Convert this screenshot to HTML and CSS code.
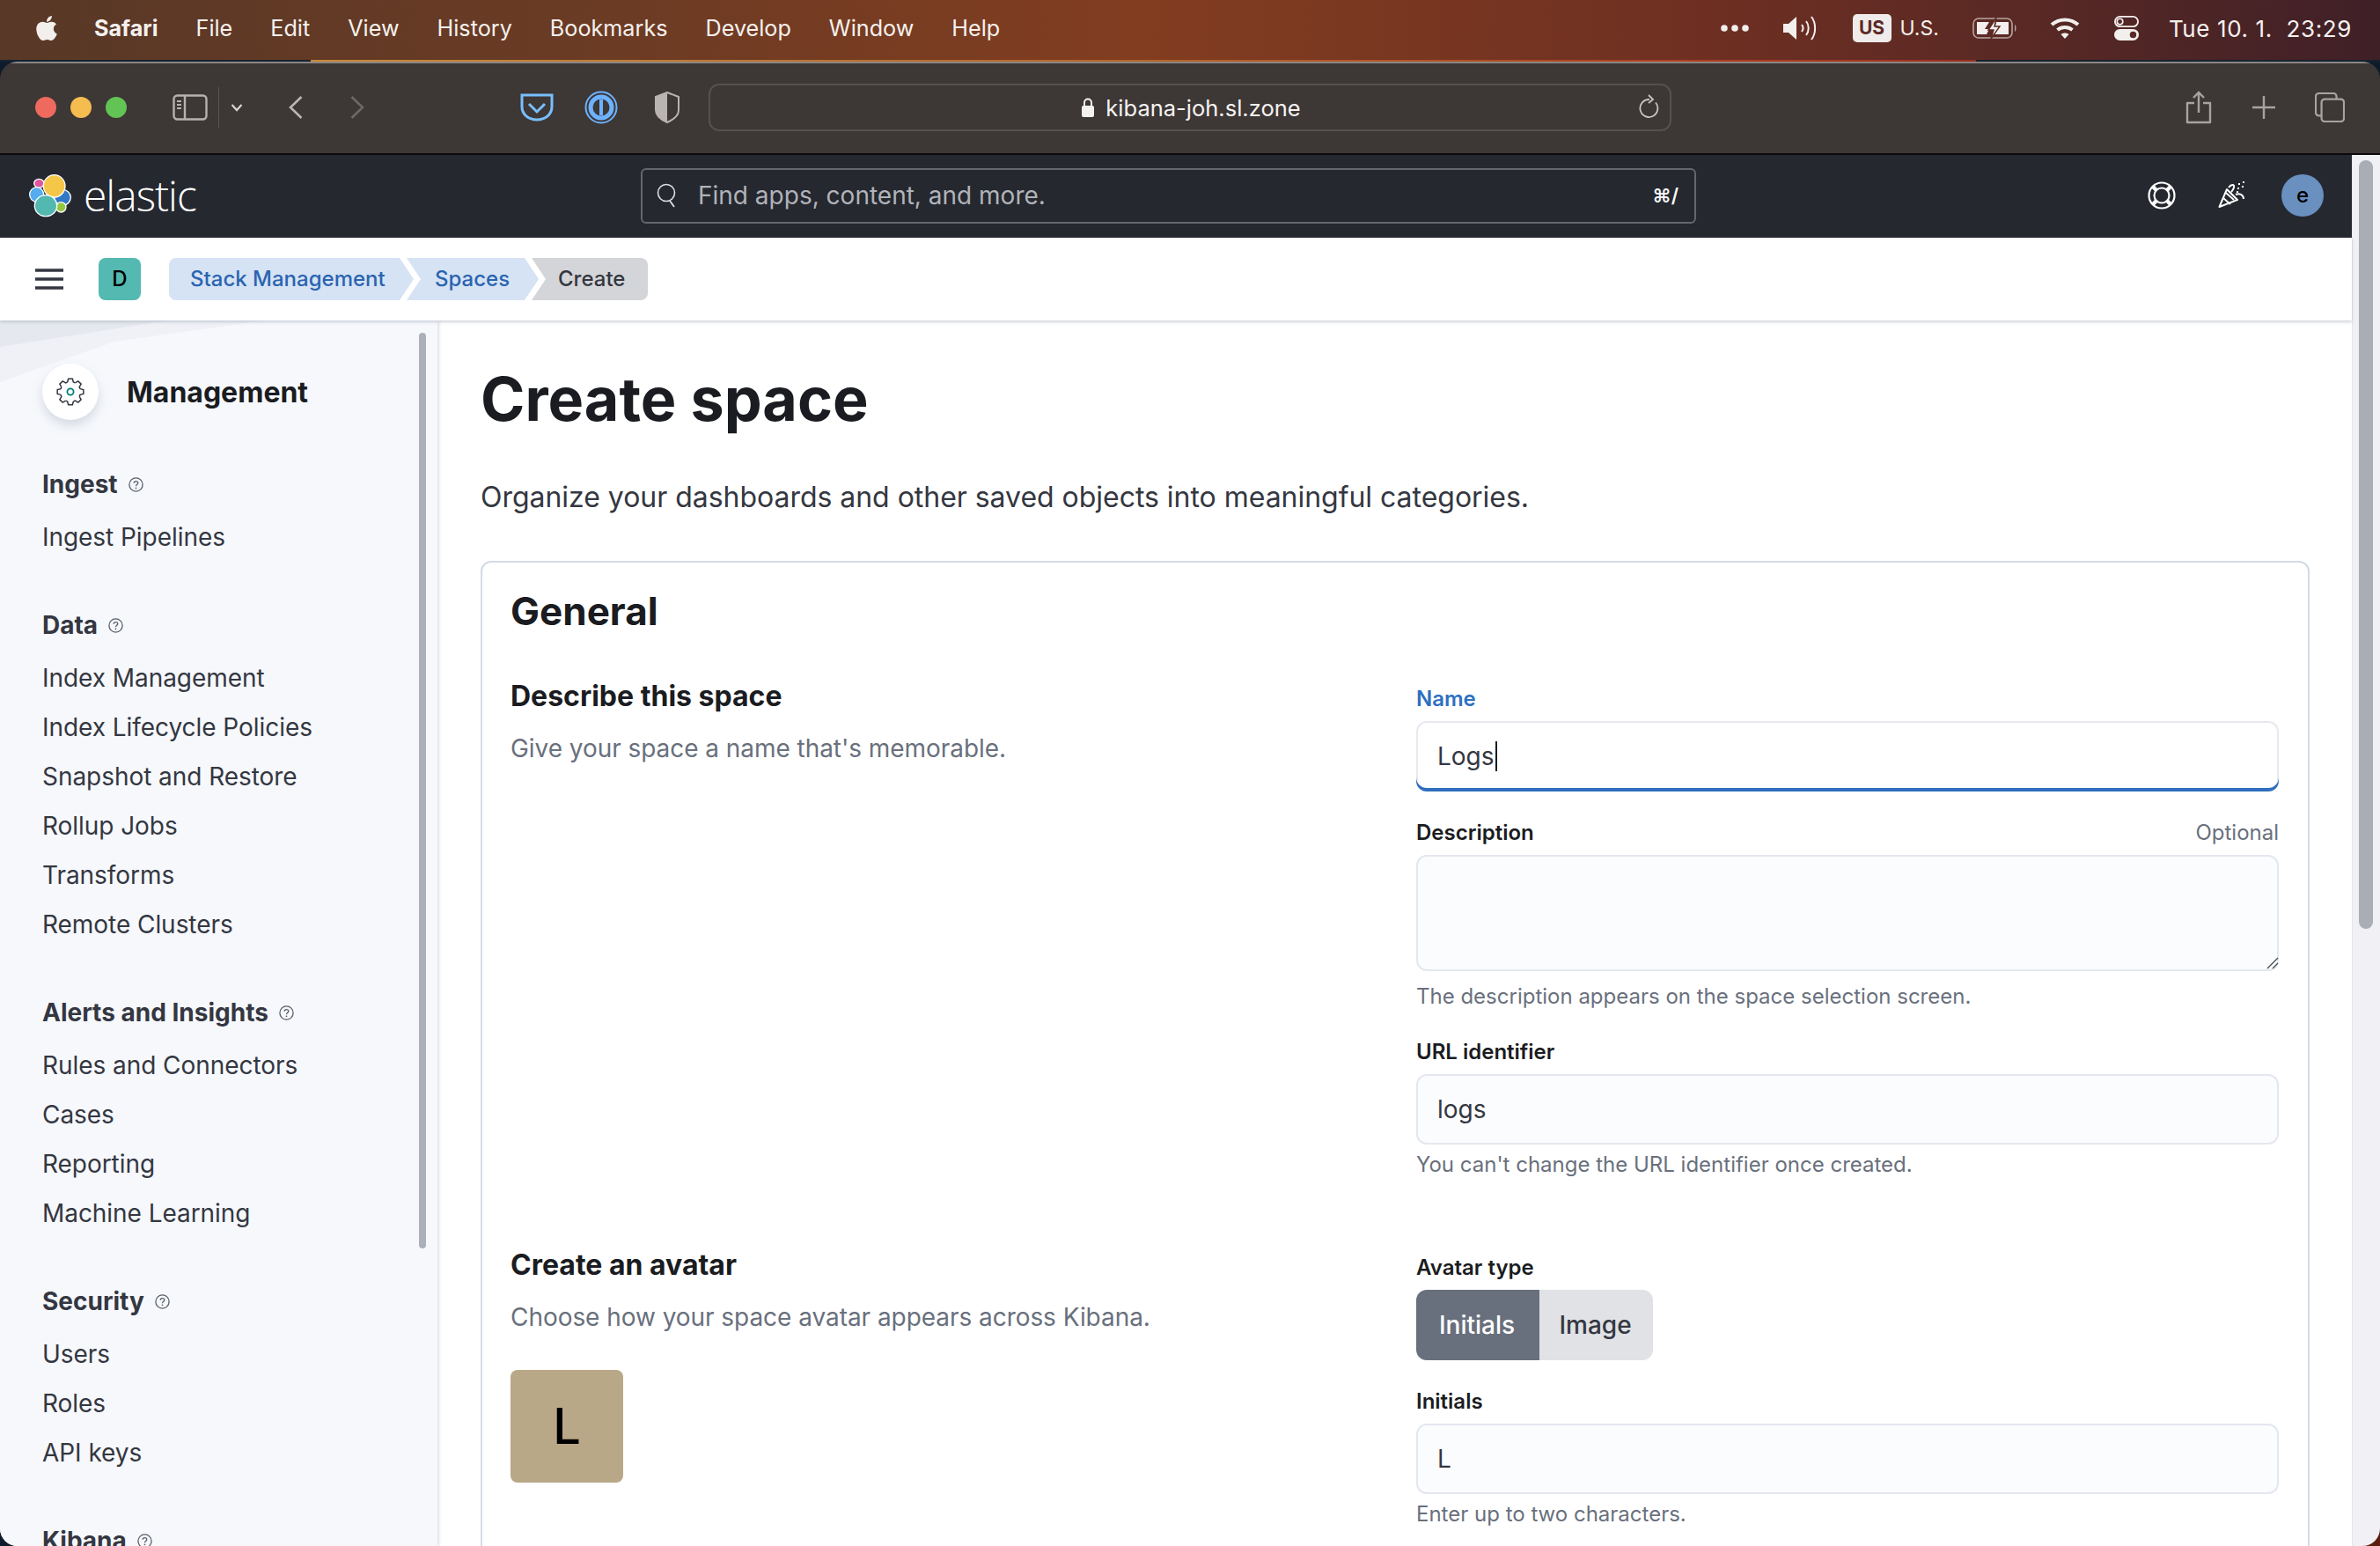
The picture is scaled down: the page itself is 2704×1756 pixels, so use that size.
FILE: index.html

```html
<!DOCTYPE html>
<html lang="en">
<head>
  <meta charset="UTF-8" />
  <meta name="viewport" content="width=device-width, initial-scale=1.0"/>
  <title>Create space - Elastic</title>
  <link rel="stylesheet" href="styles.css">
</head>
<body>
  <svg class="defs" width="0" height="0">
    <symbol id="help" viewBox="0 0 17 17">
      <circle cx="8.5" cy="8.5" r="7.6" fill="none" stroke="currentColor" stroke-width="1.3"/>
      <path d="M6.2 6.8c0-1.4 1-2.2 2.3-2.2s2.3.8 2.3 2c0 1.7-2.3 1.8-2.3 3.7" fill="none" stroke="currentColor" stroke-width="1.3"/>
      <circle cx="8.5" cy="12.3" r=".9" fill="currentColor"/>
    </symbol>
  </svg>

  <div class="menubar">
    <div class="menu-left">
      <svg class="apple" viewBox="0 0 384 512"><path fill="#f2efed" d="M318.7 268.7c-.2-36.7 16.4-64.4 50-84.8-18.8-26.9-47.2-41.7-84.7-44.6-35.5-2.8-74.3 20.7-88.5 20.7-15 0-49.4-19.7-76.4-19.7C63.3 141.2 4 184.8 4 273.5q0 39.3 14.4 81.2c12.8 36.7 59 126.7 107.2 125.2 25.2-.6 43-17.9 75.8-17.9 31.8 0 48.3 17.9 76.4 17.9 48.6-.7 90.4-82.5 102.6-119.3-65.2-30.7-61.7-90-61.7-91.9zm-56.6-164.2c27.3-32.4 24.8-61.9 24-72.5-24.1 1.4-52 16.4-67.9 34.9-17.5 19.8-27.8 44.3-25.6 71.9 26.1 2 49.9-11.4 69.5-34.3z"/></svg>
      <b class="menu-app">Safari</b>
      <span>File</span>
      <span>Edit</span>
      <span>View</span>
      <span>History</span>
      <span>Bookmarks</span>
      <span>Develop</span>
      <span>Window</span>
      <span>Help</span>
    </div>
    <div class="menu-right">
      <svg class="st-dots" viewBox="0 0 32 10"><circle cx="4" cy="5" r="3.8"/><circle cx="16" cy="5" r="3.8"/><circle cx="28" cy="5" r="3.8"/></svg>
      <svg class="st-sound" viewBox="0 0 40 30"><path d="M1 10h6l9-8v26l-9-8H1z" fill="#f2efed"/><g fill="none" stroke="#f2efed" stroke-width="2"><path d="M22 11c2 2.500 2 5.500 0 8"/><path d="M27 7c3.600 4.500 3.600 11.500 0 16"/><path d="M33 2c5.500 7 5.500 19 0 26"/></g></svg>
      <span class="st-us">US</span>
      <span class="st-lang">U.S.</span>
      <svg class="st-batt" viewBox="0 0 52 26"><rect x="1" y="2" width="44" height="22" rx="6" fill="none" stroke="#b7a5a1" stroke-width="1.6"/><path d="M5 6h14l-5 8h5l-3 6H5zM27 6h14v14H25l6-9h-5z" fill="#f2efed"/><path d="M27 1l-9 14h6l-3 10 10-14h-6z" fill="#f2efed" stroke="#5c2a25" stroke-width="1.4"/><path d="M48 9c2 1 2 7 0 8z" fill="#b7a5a1"/></svg>
      <svg class="st-wifi" viewBox="0 0 34 26"><g fill="none" stroke="#f2efed" stroke-width="4"><path d="M2 9c8.500-7.500 21.500-7.500 30 0"/><path d="M8.500 15c4.800-4 12.200-4 17 0"/></g><path d="M12.500 20c2.700-2 6.300-2 9 0l-4.500 5z" fill="#f2efed"/></svg>
      <svg class="st-ctrl" viewBox="0 0 30 30"><rect x="1" y="1" width="28" height="12" rx="6" fill="none" stroke="#f2efed" stroke-width="2"/><circle cx="7" cy="7" r="3.5" fill="none" stroke="#f2efed" stroke-width="1.8"/><rect y="16" width="30" height="14" rx="7" fill="#f2efed"/><circle cx="23" cy="23" r="4" fill="#5a2a28"/></svg>
      <span class="st-clock">Tue 10. 1.&nbsp; 23:29</span>
    </div>
  </div>

  <div class="window">
    <div class="toolbar">
      <span class="light red"></span>
      <span class="light yellow"></span>
      <span class="light green"></span>

      <svg class="tb-sidebar" viewBox="0 0 40 30"><rect x="1.5" y="1.5" width="37" height="27" rx="4" fill="none" stroke="#b7b2b0" stroke-width="2.4"/><path d="M14 2v26" stroke="#b7b2b0" stroke-width="2.4"/><path d="M5 8h5M5 12h5M5 16h5" stroke="#b7b2b0" stroke-width="1.8"/></svg>
      <span class="tb-sep"></span>
      <svg class="tb-chev" viewBox="0 0 14 10"><path d="M1.5 2L7 8l5.500-6" fill="none" stroke="#d8d4d2" stroke-width="2.2"/></svg>
      <svg class="tb-back" viewBox="0 0 18 28"><path d="M15.500 2L3 14l12.500 12" fill="none" stroke="#b9b5b3" stroke-width="2.6"/></svg>
      <svg class="tb-fwd" viewBox="0 0 18 28"><path d="M2.500 2L15 14 2.500 26" fill="none" stroke="#6c6866" stroke-width="2.6"/></svg>

      <svg class="tb-pocket" viewBox="0 0 38 32"><path d="M2 2h34v13c0 9-7.500 15-17 15S2 24 2 15z" fill="none" stroke="#79bfff" stroke-width="3"/><path d="M10 12l9 9 9-9" fill="none" stroke="#79bfff" stroke-width="3"/></svg>
      <svg class="tb-onepw" viewBox="0 0 38 38"><circle cx="19" cy="19" r="17.5" fill="none" stroke="#6cb2ff" stroke-width="2"/><circle cx="19" cy="19" r="12" fill="none" stroke="#6cb2ff" stroke-width="5"/><rect x="17" y="10" width="4" height="18" fill="#6cb2ff"/></svg>
      <svg class="tb-shield" viewBox="0 0 28 36"><path d="M14 1l13 5v15c0 7-6 11-13 14C7 32 1 28 1 21V6z" fill="#3d3735" stroke="#b9b3b1" stroke-width="2"/><path d="M14 1L1 6v15c0 7 6 11 13 14z" fill="#b9b3b1"/></svg>

      <div class="addressbar">
        <span class="address">
          <svg class="lock" viewBox="0 0 16 24"><path d="M4 11V6.500a4 4 0 018 0V11" fill="none" stroke="#f5f3f2" stroke-width="2"/><rect x="1" y="10" width="14" height="13" rx="2" fill="#f5f3f2"/></svg>
          kibana-joh.sl.zone
        </span>
        <svg class="reload" viewBox="0 0 26 30"><path d="M19 9.500a10 10 0 11-7-3.500" fill="none" stroke="#c9c5c3" stroke-width="1.8"/><path d="M11 1l5 5-5 4" fill="none" stroke="#c9c5c3" stroke-width="1.8"/></svg>
      </div>

      <svg class="tb-share" viewBox="0 0 30 38"><path d="M10 14H2v22h26V14h-8" fill="none" stroke="#a8a3a1" stroke-width="2.4" stroke-linejoin="round"/><path d="M15 25V2M9 8l6-6 6 6" fill="none" stroke="#a8a3a1" stroke-width="2.4"/></svg>
      <svg class="tb-plus" viewBox="0 0 28 28"><path d="M14 1v26M1 14h26" stroke="#a8a3a1" stroke-width="2.4"/></svg>
      <svg class="tb-tabs" viewBox="0 0 36 36"><rect x="8" y="8" width="27" height="27" rx="4" fill="none" stroke="#a8a3a1" stroke-width="2.4"/><path d="M8 28H5a4 4 0 01-4-4V5a4 4 0 014-4h17a4 4 0 014 4v3" fill="none" stroke="#a8a3a1" stroke-width="2.4"/></svg>
    </div>

    <div class="viewport">
      <div class="page">
        <header class="kbn-header">
          <div class="brand">
            <svg class="logo" viewBox="33 33 150 150">
              <g stroke="#fff" stroke-width="4">
                <ellipse cx="70" cy="67" rx="17" ry="15" fill="#e0559b"/>
                <ellipse cx="62" cy="105" rx="24" ry="25" fill="#55acee"/>
                <ellipse cx="150" cy="115" rx="28" ry="27" fill="#3178c6"/>
                <ellipse cx="145" cy="148" rx="17" ry="17" fill="#93c83e"/>
                <ellipse cx="122" cy="76" rx="37" ry="38" fill="#f5c648"/>
                <ellipse cx="93" cy="143" rx="38" ry="36" fill="#53b9b0"/>
              </g>
            </svg>
            <span class="wordmark">elastic</span>
          </div>
          <div class="searchbox">
            <svg class="search-icon" viewBox="0 0 24 28"><circle cx="11" cy="11" r="9.5" fill="none" stroke="#dfe0e3" stroke-width="1.6"/><path d="M15 20l5 7" stroke="#dfe0e3" stroke-width="1.8"/></svg>
            <span class="search-text">Find apps, content, and more.</span>
            <span class="search-key">⌘/</span>
          </div>
          <div class="header-icons">
            <svg class="hd-help" viewBox="0 0 32 32"><g fill="none" stroke="#fff" stroke-width="2.2"><circle cx="16" cy="16" r="14.5"/><circle cx="16" cy="16" r="8.5"/><path d="M6 6l4.500 4.500M26 6l-4.500 4.500M6 26l4.500-4.500M26 26l-4.500-4.500" stroke-width="4.5"/></g></svg>
            <svg class="hd-news" viewBox="0 0 32 32"><g fill="none" stroke="#fff" stroke-width="2"><path d="M10 9L1.500 29 22 21z" stroke-linejoin="round"/><path d="M6 19l8 7M9 13l9 8" stroke-width="1.8"/><path d="M12 7c3-4 7-4 6 0-.6 2-2 4-3 5"/><path d="M20 15c4-2 9 0 9 5"/></g><path d="M23 3h2M28 1h2M22 8h2M27 6h2M21 12h2" stroke="#fff" stroke-width="2"/></svg>
            <span class="user-avatar">e</span>
          </div>
        </header>

        <div class="crumbbar">
          <svg class="burger" viewBox="0 0 32 24"><path d="M0 2h32M0 12h32M0 22h32" stroke="#343741" stroke-width="3.6"/></svg>
          <span class="space-badge">D</span>
          <nav class="crumbs">
            <a class="crumb crumb-first">Stack Management</a>
            <a class="crumb crumb-mid">Spaces</a>
            <span class="crumb crumb-last">Create</span>
          </nav>
        </div>

        <div class="content">
          <aside class="sidebar">
            <div class="side-title">
              <span class="gear-circle">
                <svg class="gear" viewBox="0 0 32 32">
                  <g fill="none" stroke="#343741" stroke-width="1.5">
                    <path id="tooth" d="M12.64 5l1.01-3.8h4.7L19.36 5l2.04.85"/>
                    <use href="#tooth" transform="rotate(45 16 16)"/>
                    <use href="#tooth" transform="rotate(90 16 16)"/>
                    <use href="#tooth" transform="rotate(135 16 16)"/>
                    <use href="#tooth" transform="rotate(180 16 16)"/>
                    <use href="#tooth" transform="rotate(225 16 16)"/>
                    <use href="#tooth" transform="rotate(270 16 16)"/>
                    <use href="#tooth" transform="rotate(315 16 16)"/>
                  </g>
                  <circle cx="16" cy="16" r="3.6" fill="none" stroke="#017d73" stroke-width="1.8"/>
                </svg>
              </span>
              <span class="side-name">Management</span>
            </div>

            <div class="side-group">
              <div class="side-head">Ingest <svg class="help"><use href="#help"/></svg></div>
              <a class="side-item">Ingest Pipelines</a>
            </div>
            <div class="side-group">
              <div class="side-head">Data <svg class="help"><use href="#help"/></svg></div>
              <a class="side-item">Index Management</a>
              <a class="side-item">Index Lifecycle Policies</a>
              <a class="side-item">Snapshot and Restore</a>
              <a class="side-item">Rollup Jobs</a>
              <a class="side-item">Transforms</a>
              <a class="side-item">Remote Clusters</a>
            </div>
            <div class="side-group">
              <div class="side-head">Alerts and Insights <svg class="help"><use href="#help"/></svg></div>
              <a class="side-item">Rules and Connectors</a>
              <a class="side-item">Cases</a>
              <a class="side-item">Reporting</a>
              <a class="side-item">Machine Learning</a>
            </div>
            <div class="side-group">
              <div class="side-head">Security <svg class="help"><use href="#help"/></svg></div>
              <a class="side-item">Users</a>
              <a class="side-item">Roles</a>
              <a class="side-item">API keys</a>
            </div>
            <div class="side-group">
              <div class="side-head">Kibana <svg class="help"><use href="#help"/></svg></div>
            </div>
            <span class="side-thumb"></span>
          </aside>

          <main class="main">
            <h1>Create space</h1>
            <p class="lead">Organize your dashboards and other saved objects into meaningful categories.</p>

            <section class="panel">
              <h2>General</h2>
              <div class="form-grid">
                <div class="form-left">
                  <h3>Describe this space</h3>
                  <p>Give your space a name that's memorable.</p>
                </div>
                <div class="form-right">
                  <label class="label label-active">Name</label>
                  <div class="input input-focus"><span class="caret">Logs</span></div>

                  <div class="label-row">
                    <label class="label">Description</label>
                    <span class="optional">Optional</span>
                  </div>
                  <div class="textarea-wrap">
                    <textarea class="textarea"></textarea>
                    <svg class="resizer" viewBox="0 0 14 14"><path d="M13 1L1 13M13 7l-6 6" stroke="#4a4e58" stroke-width="1.4"/></svg>
                  </div>
                  <div class="help-text help-after-area">The description appears on the space selection screen.</div>

                  <label class="label label-next">URL identifier</label>
                  <div class="input">logs</div>
                  <div class="help-text">You can't change the URL identifier once created.</div>
                </div>

                <div class="form-left">
                  <h3>Create an avatar</h3>
                  <p>Choose how your space avatar appears across Kibana.</p>
                  <div class="avatar">L</div>
                </div>
                <div class="form-right">
                  <label class="label">Avatar type</label>
                  <div class="btn-group">
                    <span class="btn btn-on">Initials</span>
                    <span class="btn">Image</span>
                  </div>
                  <label class="label label-next">Initials</label>
                  <div class="input">L</div>
                  <div class="help-text">Enter up to two characters.</div>
                </div>
              </div>
            </section>
          </main>
        </div>
      </div>

      <div class="page-scroll"><span class="page-thumb"></span></div>
    </div>
  </div>
</body>
</html>
```

FILE: styles.css

```css
* {
  box-sizing: border-box;
}
html, body {
  height: 100%;
}
body {
  margin: 0;
  height: 1756px;
  overflow: hidden;
  display: flex;
  flex-direction: column;
  background: linear-gradient(#5a1d10, #5a1d10) right bottom / 40px 40px no-repeat, #0d1c2c;
  font-family: "Inter", "Liberation Sans", sans-serif;
  color: #343741;
}
.defs {
  position: absolute;
}

/* mac menu bar */
.menubar {
  flex: 0 0 70px;
  display: flex;
  justify-content: space-between;
  align-items: center;
  padding: 0 32px 4px 40px;
  color: #f5f1ee;
  font-size: 25.2px;
  background: linear-gradient(90deg, #583827 0%, #6b3b24 25%, #823d20 48%, #6e2f22 72%, #542725 88%, #3f2027 100%);
  border-bottom: 2px solid;
  border-image: linear-gradient(90deg, #16222e 354px, #c98a3a 354px, #b5652a 48%, #b03a20 74%, #9a3020 83%, #16222e 83%) 1;
}
.menu-left {
  display: flex;
  align-items: center;
  gap: 43px;
}
.apple {
  width: 26px;
  height: 32px;
  margin-right: -2px;
}
.menu-app {
  font-weight: 700;
}
.menu-right {
  display: flex;
  align-items: center;
}
.st-dots {
  width: 32px;
  height: 10px;
  fill: #f2efed;
}
.st-sound {
  width: 40px;
  height: 30px;
  margin-left: 38px;
}
.st-us {
  width: 44px;
  height: 32px;
  margin-left: 40px;
  border-radius: 5px;
  background: #f0eceb;
  color: #5c2a25;
  font-size: 21px;
  font-weight: 700;
  line-height: 32px;
  text-align: center;
}
.st-lang {
  margin-left: 10px;
  font-size: 23px;
}
.st-batt {
  width: 52px;
  height: 26px;
  margin-left: 38px;
}
.st-wifi {
  width: 34px;
  height: 26px;
  margin-left: 36px;
}
.st-ctrl {
  width: 30px;
  height: 28px;
  margin-left: 38px;
}
.st-clock {
  margin-left: 33px;
  font-size: 26px;
  letter-spacing: .6px;
}

/* safari window */
.window {
  flex: 1;
  min-height: 0;
  display: flex;
  flex-direction: column;
  border-radius: 20px;
  overflow: hidden;
}
.toolbar {
  flex: 0 0 106px;
  display: flex;
  align-items: center;
  padding: 0 0 2px 40px;
  background: #3d3735;
  border-top: 2px solid #8b8785;
  border-bottom: 2px solid #0c0b0b;
}
.light {
  width: 24px;
  height: 24px;
  border-radius: 50%;
  margin-right: 16px;
}
.red { background: #ee6a5f; }
.yellow { background: #f5bd4f; }
.green { background: #61c454; }
.tb-sidebar { width: 40px; height: 30px; margin-left: 36px; }
.tb-sep { width: 1px; height: 46px; margin-left: 12px; background: #5a5553; }
.tb-chev { width: 14px; height: 10px; margin-left: 13px; }
.tb-back { width: 18px; height: 28px; margin-left: 51px; }
.tb-fwd { width: 18px; height: 28px; margin-left: 52px; }
.tb-pocket { width: 38px; height: 32px; margin-left: 176px; }
.tb-onepw { width: 38px; height: 38px; margin-left: 35px; }
.tb-shield { width: 28px; height: 36px; margin-left: 42px; }
.addressbar {
  width: 1094px;
  height: 54px;
  margin-left: 33px;
  display: flex;
  align-items: center;
  justify-content: center;
  position: relative;
  border: 2px solid #565150;
  border-radius: 12px;
}
.address {
  display: flex;
  align-items: center;
  gap: 12px;
  margin-left: 2px;
  color: #f5f3f2;
  font-size: 25.5px;
}
.lock {
  width: 16px;
  height: 24px;
}
.reload {
  position: absolute;
  right: 9px;
  top: 10px;
  width: 26px;
  height: 30px;
}
.tb-share { width: 30px; height: 38px; margin-left: 584px; }
.tb-plus { width: 28px; height: 28px; margin-left: 45px; }
.tb-tabs { width: 34px; height: 34px; margin-left: 44px; }

/* kibana */
.viewport {
  flex: 1;
  min-height: 0;
  display: flex;
}
.page {
  flex: 0 0 2672px;
  display: flex;
  flex-direction: column;
  background: #fff;
  min-width: 0;
}
.page-scroll {
  flex: 1;
  padding: 6px 8px 0 7px;
  background: #f1f1f5;
  border-left: 1px solid #e6e6ea;
}
.page-thumb {
  display: block;
  height: 873px;
  border-radius: 8px;
  background: #a9adb6;
}
.kbn-header {
  flex: 0 0 94px;
  display: flex;
  align-items: center;
  padding-bottom: 2px;
  background: #25282f;
}
.brand {
  width: 728px;
  display: flex;
  align-items: center;
  padding-left: 32px;
}
.logo {
  width: 50px;
  height: 50px;
}
.wordmark {
  margin-left: 13px;
  color: #fff;
  font-family: "Open Sans", sans-serif;
  font-size: 48px;
  font-weight: 300;
  line-height: 60px;
  letter-spacing: -1px;
}
.searchbox {
  width: 1199px;
  height: 63px;
  display: flex;
  align-items: center;
  padding: 0 18px 0 16px;
  border: 2px solid #64676e;
  border-radius: 6px;
}
.search-icon {
  width: 24px;
  height: 28px;
}
.search-text {
  flex: 1;
  margin-left: 23px;
  color: #b1b3ba;
  font-size: 28px;
}
.search-key {
  color: #f5f6f7;
  font-size: 22px;
  font-weight: 600;
}
.header-icons {
  flex: 1;
  display: flex;
  align-items: center;
  padding-left: 513px;
}
.hd-help { width: 32px; height: 32px; }
.hd-news { width: 32px; height: 32px; margin-left: 48px; }
.user-avatar {
  width: 48px;
  height: 48px;
  margin-left: 40px;
  border-radius: 50%;
  background: #6a90bf;
  color: #000;
  font-size: 24px;
  font-weight: 500;
  line-height: 48px;
  text-align: center;
}
.crumbbar {
  flex: 0 0 94px;
  display: flex;
  align-items: center;
  padding-left: 40px;
  background: #fff;
  position: relative;
  z-index: 2;
  box-shadow: 0 2px 3px rgba(152, 162, 179, 0.45);
}
.burger {
  width: 32px;
  height: 24px;
}
.space-badge {
  width: 48px;
  height: 48px;
  margin-left: 40px;
  border-radius: 8px;
  background: #54b9b0;
  color: #000;
  font-size: 24px;
  font-weight: 500;
  line-height: 48px;
  text-align: center;
}
.crumbs {
  display: flex;
  margin-left: 32px;
}
.crumb {
  height: 48px;
  font-size: 24px;
  font-weight: 500;
  line-height: 48px;
}
.crumb-first {
  width: 278px;
  padding-left: 24px;
  background: #d5e3f4;
  color: #2b64b0;
  border-radius: 8px 0 0 8px;
  clip-path: polygon(0 0, 262px 0, 278px 24px, 262px 48px, 0 48px);
}
.crumb-mid {
  width: 150px;
  margin-left: -8px;
  padding-left: 32px;
  background: #d5e3f4;
  color: #2b64b0;
  clip-path: polygon(0 0, 134px 0, 150px 24px, 134px 48px, 0 48px, 16px 24px);
}
.crumb-last {
  width: 132px;
  margin-left: -8px;
  padding-left: 30px;
  background: #d4d5d8;
  color: #343741;
  border-radius: 0 8px 8px 0;
  clip-path: polygon(0 0, 132px 0, 132px 48px, 0 48px, 16px 24px);
}
.content {
  flex: 1;
  min-height: 0;
  display: flex;
}

/* side nav */
.sidebar {
  flex: 0 0 497px;
  padding: 49px 0 0 48px;
  position: relative;
  overflow: hidden;
  background: #f6f8fc;
  box-shadow: 2px 0 3px rgba(152, 162, 179, 0.3);
  z-index: 1;
}
.sidebar::before,
.sidebar::after {
  content: "";
  position: absolute;
  left: 0;
  top: 0;
  width: 300px;
  height: 80px;
}
.sidebar::before {
  background: #eff1f6;
  clip-path: polygon(0 0, 300px 0, 130px 24px, 0 70px);
}
.sidebar::after {
  background: #e5e8ee;
  clip-path: polygon(0 0, 190px 0, 0 30px);
}
.side-title {
  display: flex;
  align-items: center;
  position: relative;
  z-index: 1;
  margin-bottom: 53px;
}
.gear-circle {
  width: 64px;
  height: 64px;
  display: flex;
  align-items: center;
  justify-content: center;
  border-radius: 50%;
  background: #fff;
  box-shadow: 0 6px 12px rgba(152, 162, 179, 0.35);
}
.gear {
  width: 32px;
  height: 32px;
}
.side-name {
  margin-left: 32px;
  color: #1a1c21;
  font-size: 32px;
  font-weight: 700;
}
.side-group {
  margin-bottom: 52px;
}
.side-head {
  display: flex;
  align-items: center;
  gap: 12px;
  height: 40px;
  margin-bottom: 12px;
  font-size: 28px;
  font-weight: 700;
}
.help {
  width: 17px;
  height: 17px;
  color: #5a5f6b;
}
.side-item {
  display: block;
  height: 56px;
  color: #343741;
  font-size: 28px;
  line-height: 56px;
  letter-spacing: -0.05px;
}
.side-thumb {
  position: absolute;
  left: 476px;
  top: 14px;
  width: 8px;
  height: 1040px;
  border-radius: 4px;
  background: #abb0b9;
}

/* main column */
.main {
  flex: 1;
  min-width: 0;
  padding: 47px 48px 0 49px;
  overflow: hidden;
}
h1 {
  margin: 0;
  color: #1a1c21;
  font-size: 68.2px;
  font-weight: 700;
  line-height: 84px;
}
.lead {
  margin: 46px 0 48px;
  color: #343741;
  font-size: 32px;
  line-height: 48px;
  letter-spacing: -0.03px;
}
.panel {
  padding: 27px 33px 0 32px;
  height: 1400px;
  border: 2px solid #d3dae6;
  border-radius: 12px;
  background: #fff;
}
h2 {
  margin: 0 0 48px;
  color: #1a1c21;
  font-size: 44px;
  font-weight: 700;
  line-height: 56px;
}
.form-grid {
  display: grid;
  grid-template-columns: 1fr 980px;
  row-gap: 77px;
}
.form-left {
  padding-top: 1px;
}
.form-left h3 {
  margin: 0 0 19px;
  color: #1a1c21;
  font-size: 32px;
  font-weight: 700;
  line-height: 40px;
}
.form-left p {
  margin: 0;
  color: #69707d;
  font-size: 28px;
  line-height: 40px;
  letter-spacing: -0.05px;
}
.avatar {
  width: 128px;
  height: 128px;
  margin-top: 40px;
  border-radius: 8px;
  background: #b9a888;
  color: #000;
  font-size: 56px;
  font-weight: 500;
  line-height: 128px;
  text-align: center;
}
.form-right {
  padding-top: 7px;
}
.label {
  display: block;
  margin-bottom: 8px;
  color: #1a1c21;
  font-size: 24px;
  font-weight: 600;
  line-height: 34px;
}
.label-active {
  color: #2d6fc0;
}
.label-next {
  margin-top: 30px;
}
.label-row {
  display: flex;
  justify-content: space-between;
  margin-top: 30px;
}
.optional {
  color: #69707d;
  font-size: 24px;
  line-height: 34px;
}
.input {
  height: 80px;
  padding: 0 24px;
  background: #fbfcfd;
  border-radius: 12px;
  box-shadow: inset 0 0 0 2px #e4e7ef;
  color: #343741;
  font-size: 28px;
  line-height: 80px;
}
.input-focus {
  background: #fff;
  box-shadow: inset 0 -4px 0 0 #2f6fbe, inset 0 0 0 2px #e8e9f0;
}
.caret {
  padding-right: 1px;
  border-right: 2px solid #1a1c21;
}
.textarea-wrap {
  position: relative;
  height: 132px;
}
.textarea {
  display: block;
  width: 100%;
  height: 132px;
  margin: 0;
  border: 2px solid #e4e7ef;
  border-radius: 12px;
  background: #fbfcfd;
  outline: none;
  resize: none;
}
.resizer {
  position: absolute;
  right: 0;
  bottom: 2px;
  width: 14px;
  height: 14px;
}
.help-text {
  margin-top: 7px;
  color: #69707d;
  font-size: 24px;
  line-height: 32px;
}
.help-after-area {
  margin-top: 13px;
}
.btn-group {
  display: flex;
  width: 269px;
  height: 80px;
  border-radius: 12px;
  overflow: hidden;
}
.btn {
  flex: 0 0 129px;
  padding-right: 2px;
  background: #e0e2e6;
  color: #343741;
  font-size: 28px;
  font-weight: 500;
  line-height: 80px;
  text-align: center;
}
.btn-on {
  flex: 0 0 140px;
  background: #69707d;
  color: #fff;
}
```
